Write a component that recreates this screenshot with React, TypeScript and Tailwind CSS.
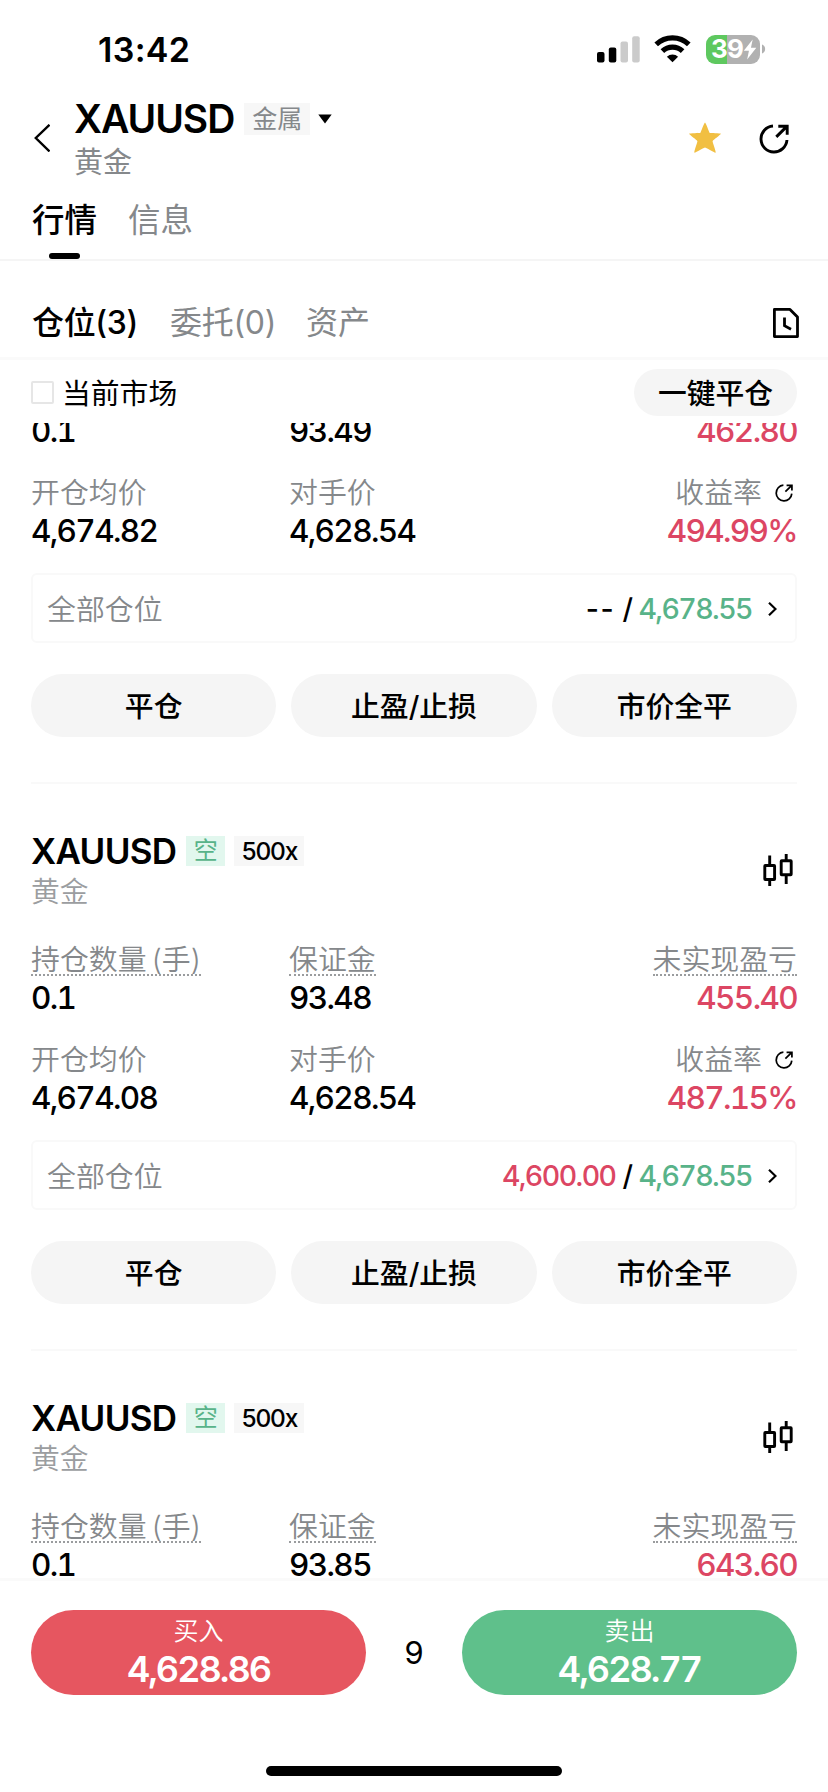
import clsx from "clsx";

interface Cell {
  label: string;
  value: string;
}

interface Position {
  id: number;
  size: string;
  margin: string;
  pnl: string;
  openPrice: string;
  markPrice: string;
  roe: string;
  takeProfit?: string;
  stopLoss: string;
}

const positions: Position[] = [
  {
    id: 1,
    size: "0.1",
    margin: "93.49",
    pnl: "462.80",
    openPrice: "4,674.82",
    markPrice: "4,628.54",
    roe: "494.99%",
    stopLoss: "4,678.55",
  },
  {
    id: 2,
    size: "0.1",
    margin: "93.48",
    pnl: "455.40",
    openPrice: "4,674.08",
    markPrice: "4,628.54",
    roe: "487.15%",
    takeProfit: "4,600.00",
    stopLoss: "4,678.55",
  },
];

const ShareIcon = ({ className }: { className?: string }) => (
  <svg viewBox="0 0 30 30" fill="none" stroke="currentColor" strokeWidth="2.9" className={className}>
    <path d="M14 2.04A13 13 0 1 0 27.96 16" />
    <path d="M17.3 12.9 27.6 2.6M19.3 2.3h8.9v8.5" />
  </svg>
);

const CandleIcon = () => (
  <svg viewBox="0 0 30 32" fill="none" stroke="#000" strokeWidth="2.9" className="h-8 w-[30px]">
    <rect x="1.8" y="11.5" width="9.8" height="14" rx="0.5" />
    <path d="M6.7 1.5v10M6.7 25.5v6.5" />
    <rect x="18.2" y="6.8" width="10" height="14" rx="0.5" />
    <path d="M23.2 0v6.8M23.2 20.8V30" />
  </svg>
);

const StatusBar = () => (
  <div className="flex h-[98px] items-center justify-between pl-[98px] pr-[62px]">
    <span className="pt-0.5 text-[34px] font-semibold leading-[40px] tracking-[0.01em]">13:42</span>
    <div className="flex items-center">
      <svg viewBox="0 0 43 27" className="h-[27px] w-[43px]">
        <rect x="0" y="16" width="7.5" height="10.5" rx="2" fill="#000" />
        <rect x="11.8" y="11.5" width="7.5" height="15" rx="2" fill="#000" />
        <rect x="23.5" y="5.5" width="7.5" height="21" rx="2" fill="#cbcbcb" />
        <rect x="35.2" y="0.2" width="7.5" height="26.3" rx="2" fill="#cbcbcb" />
      </svg>
      <svg viewBox="0 0 37 28" fill="none" stroke="#000" className="ml-3.5 h-7 w-[37px]">
        <path d="M2.2 9.4a23.6 23.6 0 0 1 32.6 0" strokeWidth="5.2" />
        <path d="M8.4 16.2a14.6 14.6 0 0 1 20.2 0" strokeWidth="5.2" />
        <path d="M18.5 27.3 12.9 21.8a8 8 0 0 1 11.2 0Z" fill="#000" stroke="none" />
      </svg>
      <div className="ml-[15px] flex h-[29px] w-[54px] items-center justify-center rounded-[9px] bg-[linear-gradient(90deg,#5ec85f_39%,#b1b1b1_39%)] pl-0.5 text-white">
        <span className="text-[26px] font-bold leading-none tracking-[-0.03em]">39</span>
        <svg viewBox="0 0 14 22" className="h-[21px] w-[14px]" fill="#fff">
          <path d="M9.8 0.5 0.5 12.3h5.4L4 21.5 13.6 9.2H8Z" />
        </svg>
      </div>
      <svg viewBox="0 0 4 10" className="ml-0.5 h-2.5 w-1">
        <path d="M0 0.5a4.8 4.8 0 0 1 0 9Z" fill="#b1b1b1" />
      </svg>
    </div>
  </div>
);

const Header = () => (
  <header className="border-b-2 border-[#f5f5f5]">
    <div className="flex h-[84px] items-center pr-[39px]">
      <svg viewBox="0 0 16 28" fill="none" stroke="#000" strokeWidth="2.4" className="ml-[34px] mt-[-5px] h-7 w-4">
        <path d="M15.5 0.8 1.8 14l13.7 13.4" />
      </svg>
      <div className="ml-6 flex flex-col">
        <div className="flex h-[42px] items-center">
          <span className="text-[39px] font-semibold tracking-[-0.027em]">XAUUSD</span>
          <span className="ml-2.5 h-8 w-[66px] bg-[#f7f7f7] text-center text-[25px] leading-8 text-[#85888b]">
            金属
          </span>
          <svg viewBox="0 0 14 10" className="ml-2 h-2.5 w-3.5">
            <path d="M0.3 0.6h13.4L7 9.6Z" />
          </svg>
        </div>
        <span className="h-[42px] text-[29px] leading-[46px] text-[#85888b]">黄金</span>
      </div>
      <svg viewBox="0 0 32 32" className="ml-auto mt-[-4px] h-8 w-8" fill="#f1bf42">
        <path d="M16 0.5c.7 0 4.1 9.6 4.5 10.200.5.4 11.200.3 11.400 1.100.2.700-8.100 6.500-8.300 7.400-.2.800 3.700 11 3 11.400-.7.500-9.900-5.100-10.600-5.100-.7 0-9.900 5.600-10.600 5.100-.7-.4 3.200-10.600 3-11.400C8.200 18.300-.1 12.500.1 11.800c.2-.8 10.900-.7 11.400-1.100C11.900 10.100 15.300.5 16 .5Z" />
      </svg>
      <ShareIcon className="ml-[38px] mt-[-2px] h-[30px] w-[30px]" />
    </div>
    <nav className="flex h-[77px] gap-8 pl-[32px] text-[32.5px] leading-[78px]">
      <div className="flex flex-col items-center">
        <span className="h-[71px] font-medium">行情</span>
        <span className="h-[6px] w-[31px] rounded-[3px] bg-black" />
      </div>
      <span className="ml-[-1px] text-[#85888b]">信息</span>
    </nav>
  </header>
);

const ListTabs = () => (
  <div className="flex h-[99px] items-center border-b-3 border-[#fafafa] pl-[32px] pr-[30px] pt-[28px] text-[32px]">
    <span className="font-medium tracking-[-0.01em]">仓位(3)</span>
    <span className="ml-[32px] tracking-[-0.01em] text-[#85888b]">委托(0)</span>
    <span className="ml-[30px] text-[#85888b]">资产</span>
    <svg viewBox="0 0 26 30" fill="none" stroke="#000" strokeWidth="2.8" className="ml-auto mr-[-1px] h-[30px] w-[26px]">
      <path d="M1.4 1.4h15.6l7.5 7.6v19.6H1.4Z" strokeLinejoin="round" />
      <path d="M11.5 9.5v8.2l6.5 3.5" />
    </svg>
  </div>
);

const Toolbar = () => (
  <div className="flex h-[63px] items-start justify-between pl-[31px] pr-[31px] pt-[9px]">
    <label className="flex h-[47px] items-center text-[28.8px] leading-[47px]">
      <span className="mr-2 size-[23px] rounded-[2px] border-2 border-[#e6e6e6]" />
      <span className="pt-0.5">当前市场</span>
    </label>
    <button className="h-[47px] w-[163px] rounded-full bg-[#f5f5f5] pt-0.5 text-[28.8px] font-medium">一键平仓</button>
  </div>
);

const labelClass = "text-[28.9px] leading-[39px] text-[#85888b] font-[350]";
const valueClass = "text-[31.5px] leading-[40px] font-medium tabular-nums tracking-[-0.052em] h-[38px]";
const dottedClass = "h-9 border-b-2 border-dotted border-[#9a9c9e] [word-spacing:-3px]";

const Values = ({ items }: { items: string[] }) => (
  <div className="grid grid-cols-[258px_1fr_auto]">
    {items.map((v, i) => (
      <span key={i} className={clsx(valueClass, i === 2 && "text-[#dc4663]")}>
        {v}
      </span>
    ))}
  </div>
);

const SizeRow = ({ cells }: { cells: Cell[] }) => (
  <div>
    <div className="flex h-[38px] justify-between">
      <div className="flex">
        <div className="w-[258px]">
          <span className={clsx(labelClass, dottedClass, "inline-block")}>{cells[0].label}</span>
        </div>
        <span className={clsx(labelClass, dottedClass)}>{cells[1].label}</span>
      </div>
      <span className={clsx(labelClass, dottedClass)}>{cells[2].label}</span>
    </div>
    <Values items={cells.map((c) => c.value)} />
  </div>
);

const PriceRow = ({ position }: { position: Position }) => (
  <div className="mt-6">
    <div className={clsx(labelClass, "flex h-[38px]")}>
      <span className="w-[258px]">开仓均价</span>
      <span>对手价</span>
      <span className="ml-auto">收益率</span>
      <ShareIcon className="ml-[13px] mr-1 mt-[11px] h-[18px] w-[18px] text-black" />
    </div>
    <Values items={[position.openPrice, position.markPrice, position.roe]} />
  </div>
);

const sizeCells = (size: string, margin: string, pnl: string): Cell[] => [
  { label: "持仓数量 (手)", value: size },
  { label: "保证金", value: margin },
  { label: "未实现盈亏", value: pnl },
];

const CardTitle = () => (
  <div className="flex h-[157px] items-start justify-between pr-1 pt-12">
    <div>
      <div className="flex h-10 items-center">
        <span className="text-[35px] font-semibold tracking-[-0.02em]">XAUUSD</span>
        <span className="ml-2.5 h-[30px] w-[39px] bg-[#e2f7ee] text-center text-[24px] leading-[30px] text-[#58b389]">
          空
        </span>
        <span className="ml-[9px] h-[30px] w-[70px] bg-[#f7f7f7] text-center text-[24.5px] font-medium leading-[30px] tracking-[-0.05em]">
          500x
        </span>
      </div>
      <div className="h-10 text-[28.8px] font-[350] leading-[42px] text-[#9b9da0]">黄金</div>
    </div>
    <div className="mt-[23px]">
      <CandleIcon />
    </div>
  </div>
);

const Actions = ({ position }: { position: Position }) => (
  <>
    <div className="mt-6 flex h-[70px] items-center rounded-[6px] border-2 border-[#f9f9f9] px-[14px]">
      <span className={clsx(labelClass, "pt-0.5")}>全部仓位</span>
      <div className="ml-auto flex items-center gap-[7px] pt-0.5 text-[28.5px] font-medium tracking-[-0.055em]">
        {position.takeProfit ? (
          <span className="tabular-nums text-[#dc4663]">{position.takeProfit}</span>
        ) : (
          <span className="tracking-[0.06em]">--</span>
        )}
        <span>/</span>
        <span className="tabular-nums text-[#58b389]">{position.stopLoss}</span>
      </div>
      <svg viewBox="0 0 9 14" fill="none" stroke="#000" strokeWidth="2.2" className="ml-4 mr-1 mt-0.5 h-3.5 w-[9px]">
        <path d="M1 0.8 7.5 7 1 13.2" />
      </svg>
    </div>
    <div className="mt-[31px] grid grid-cols-3 gap-[15px] text-[28.8px] font-medium">
      {["平仓", "止盈/止损", "市价全平"].map((text) => (
        <button key={text} className="h-[63px] rounded-full bg-[#f5f5f5] pt-0.5">
          {text}
        </button>
      ))}
    </div>
    <div className="mt-[45px] h-0.5 bg-[#f9f9f9]" />
  </>
);

const TradeBar = () => (
  <footer className="h-[214px] border-t-3 border-[#fafafa] bg-white">
    <div className="flex items-center justify-between px-[31px] pt-[29px] tabular-nums">
      <button className="flex h-[85px] w-[335px] flex-col items-center rounded-full bg-[#e65660] pt-[3px] text-white">
        <span className="h-9 text-[25px] font-[350] leading-9">买入</span>
        <span className="text-[36px] font-semibold leading-[40px] tracking-[-0.055em]">4,628.86</span>
      </button>
      <span className="pt-0.5 text-[31px]">9</span>
      <button className="flex h-[85px] w-[335px] flex-col items-center rounded-full bg-[#5fc08b] pt-[3px] text-white">
        <span className="h-9 text-[25px] font-[350] leading-9">卖出</span>
        <span className="text-[36px] font-semibold leading-[40px] tracking-[-0.055em]">4,628.77</span>
      </button>
    </div>
    <div className="mx-auto mt-[71px] h-2.5 w-[296px] rounded-full bg-black" />
  </footer>
);

const App = () => {
  const [first, second] = positions;

  return (
    <div className="flex h-[1792px] w-[828px] flex-col overflow-hidden bg-white font-['Inter','Noto_Sans_CJK_SC',sans-serif] text-black">
      <StatusBar />
      <Header />
      <ListTabs />
      <Toolbar />
      <main className="min-h-0 flex-1 overflow-hidden px-[31px]">
        {/* first card is scrolled under the toolbar */}
        <div className="-mt-3">
          <Values items={[first.size, first.margin, first.pnl]} />
          <PriceRow position={first} />
          <Actions position={first} />
        </div>
        <div className="-mt-px">
          <CardTitle />
          <SizeRow cells={sizeCells(second.size, second.margin, second.pnl)} />
          <PriceRow position={second} />
          <Actions position={second} />
        </div>
        <div className="-mt-px">
          <CardTitle />
          <SizeRow cells={sizeCells("0.1", "93.85", "643.60")} />
        </div>
      </main>
      <TradeBar />
    </div>
  );
};

export default App;
